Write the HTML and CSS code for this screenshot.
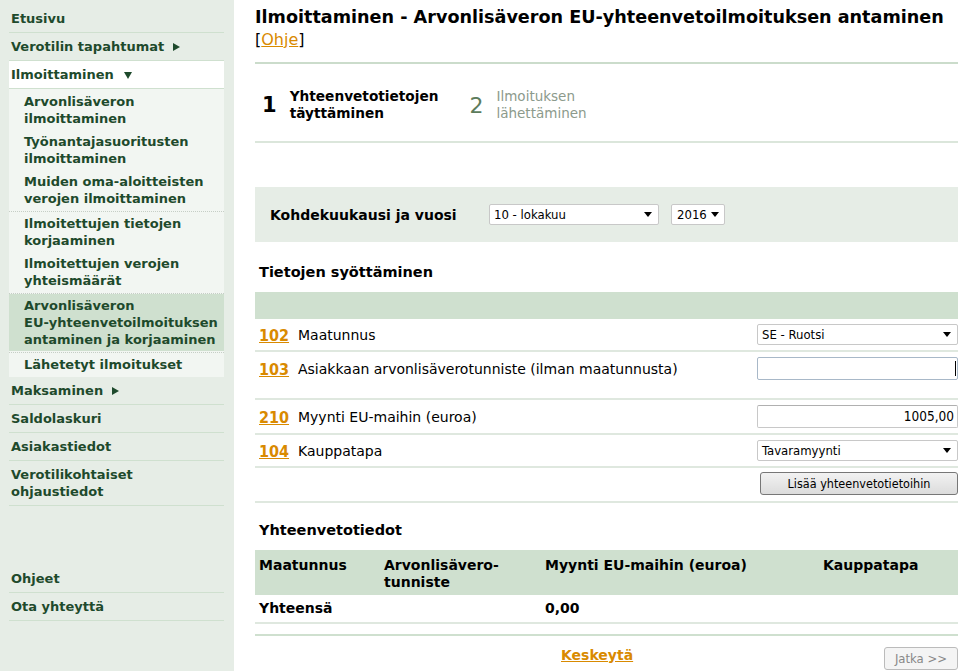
FILE: index.html
```html
<!DOCTYPE html>
<html lang="fi">
<head>
<meta charset="utf-8">
<title>Ilmoittaminen</title>
<link rel="stylesheet" href="styles.css">
</head>
<body>
<div class="page">
  <nav class="sidebar">
    <ul class="menu">
      <li class="item"><a>Etusivu</a></li>
      <li class="item"><a>Verotilin tapahtumat <svg class="arr" width="7" height="8" viewBox="0 0 7 8"><path d="M0 0L7 4L0 8Z"/></svg></a></li>
      <li class="item open"><a>Ilmoittaminen <svg class="arr down" width="8" height="7" viewBox="0 0 8 7"><path d="M0 0H8L4 7Z"/></svg></a>
        <ul class="sub">
          <li class="group">
            <a>Arvonlisäveron ilmoittaminen</a>
            <a>Työnantajasuoritusten ilmoittaminen</a>
            <a>Muiden oma-aloitteisten verojen ilmoittaminen</a>
          </li>
          <li class="group">
            <a>Ilmoitettujen tietojen korjaaminen</a>
            <a>Ilmoitettujen verojen yhteismäärät</a>
          </li>
          <li class="group">
            <a class="current">Arvonlisäveron <span class="nw">EU-yhteenvetoilmoituksen</span> antaminen ja korjaaminen</a>
          </li>
          <li class="group last">
            <a>Lähetetyt ilmoitukset</a>
          </li>
        </ul>
      </li>
      <li class="item"><a>Maksaminen <svg class="arr" width="7" height="8" viewBox="0 0 7 8"><path d="M0 0L7 4L0 8Z"/></svg></a></li>
      <li class="item"><a>Saldolaskuri</a></li>
      <li class="item"><a>Asiakastiedot</a></li>
      <li class="item"><a>Verotilikohtaiset ohjaustiedot</a></li>
    </ul>
    <ul class="menu bottom">
      <li class="item"><a>Ohjeet</a></li>
      <li class="item"><a>Ota yhteyttä</a></li>
    </ul>
  </nav>

  <main class="main">
    <h1 class="title">Ilmoittaminen - Arvonlisäveron EU-yhteenvetoilmoituksen antaminen</h1>
    <div class="help">[<a class="link">Ohje</a>]</div>
    <div class="divider"></div>

    <div class="steps">
      <div class="step active"><span class="num">1</span><span class="label">Yhteenvetotietojen<br>täyttäminen</span></div>
      <div class="step"><span class="num">2</span><span class="label">Ilmoituksen<br>lähettäminen</span></div>
    </div>

    <div class="period">
      <span class="period-label">Kohdekuukausi ja vuosi</span>
      <div class="select month"><span>10 - lokakuu</span><svg width="8" height="5" viewBox="0 0 8 5"><path d="M0 0H8L4 5Z"/></svg></div>
      <div class="select year"><span>2016</span><svg width="8" height="5" viewBox="0 0 8 5"><path d="M0 0H8L4 5Z"/></svg></div>
    </div>

    <h2 class="section">Tietojen syöttäminen</h2>
    <div class="bar"></div>

    <div class="row r1">
      <a class="code">102</a><span class="lbl">Maatunnus</span>
      <div class="select field"><span>SE - Ruotsi</span><svg width="8" height="5" viewBox="0 0 8 5"><path d="M0 0H8L4 5Z"/></svg></div>
    </div>
    <div class="row r2">
      <a class="code">103</a><span class="lbl">Asiakkaan arvonlisäverotunniste (ilman maatunnusta)</span>
      <div class="input focus"><span class="caret"></span></div>
    </div>
    <div class="row r3">
      <a class="code">210</a><span class="lbl">Myynti EU-maihin (euroa)</span>
      <div class="input num">1005,00</div>
    </div>
    <div class="row r4">
      <a class="code">104</a><span class="lbl">Kauppatapa</span>
      <div class="select field"><span>Tavaramyynti</span><svg width="8" height="5" viewBox="0 0 8 5"><path d="M0 0H8L4 5Z"/></svg></div>
    </div>
    <div class="row r5">
      <button class="btn add">Lisää yhteenvetotietoihin</button>
    </div>

    <h3 class="subtitle">Yhteenvetotiedot</h3>
    <table class="summary">
      <thead>
        <tr><th class="c1">Maatunnus</th><th class="c2">Arvonlisävero-<br>tunniste</th><th class="c3">Myynti EU-maihin (euroa)</th><th class="c4">Kauppatapa</th></tr>
      </thead>
      <tbody>
        <tr><td>Yhteensä</td><td></td><td>0,00</td><td></td></tr>
      </tbody>
    </table>

    <div class="actions">
      <a class="link cancel">Keskeytä</a>
      <button class="btn next" disabled>Jatka &gt;&gt;</button>
    </div>
  </main>
</div>
</body>
</html>
```

FILE: styles.css
```css
* { box-sizing: border-box; }
html, body { margin: 0; padding: 0; background: #fff; }
body { font-family: "DejaVu Sans", Verdana, sans-serif; font-size: 14px; color: #000; }

.page { display: flex; min-height: 671px; }

/* Sidebar */
.sidebar {
  width: 234px;
  flex: none;
  background: #e6ede6;
  padding: 5px 10px 0 9px;
  font-family: "DejaVu Sans", Verdana, sans-serif;
  font-weight: bold;
  font-size: 13px;
  line-height: 17px;
  color: #1e4a2c;
}
.menu { list-style: none; margin: 0; padding: 0; }
.menu.bottom { margin-top: 59px; }
.item > a {
  display: block;
  padding: 5px 2px;
  border-bottom: 1px solid #cfe0cf;
}
.item.open > a { background: #fff; }
.arr { fill: #1e4a2c; margin-left: 4px; vertical-align: 0; }
.arr.down { margin-left: 6px; }
.sub {
  list-style: none;
  margin: 0;
  padding: 1px 0 0;
  background: #f2f6f2;
}
.group { border-bottom: 1px dotted #c6cec6; padding-bottom: 1px; }
.group.last { border-bottom: none; padding-bottom: 1px; }
.sub a {
  display: block;
  padding: 3px 0 3px 15px;
}
.sub a.current { background: #cfe0cf; }
.nw { white-space: nowrap; }

/* Main */
.main {
  flex: 1;
  min-width: 0;
  padding: 0 15px 0 21px;
}
.title {
  margin: 0;
  padding-top: 6px;
  font-size: 17.6px;
  line-height: 22px;
  font-weight: bold;
}
.help {
  font-size: 16px;
  line-height: 20px;
  margin-top: 2px;
}
.divider {
  height: 2px;
  margin-top: 12px;
  background: #cbdccb;
}
.link { color: #d98a00; text-decoration: underline; font-weight: bold; }
.help .link { font-weight: normal; }

.steps {
  display: flex;
  gap: 31px;
  padding: 24px 0 19px 7px;
  border-bottom: 2px solid #dbe6db;
}
.step { display: flex; align-items: center; gap: 13px; }
.step .num { font-size: 21px; font-weight: bold; }
.step .label { font-size: 13.7px; line-height: 17px; font-weight: bold; }
.step:not(.active) .num { color: #5c7c5c; font-weight: normal; font-size: 22px; }
.step:not(.active) .label { color: #8c9a8c; font-weight: normal; font-size: 13.5px; }

.period {
  margin-top: 44px;
  height: 55px;
  background: #e6ede6;
  display: flex;
  align-items: center;
  padding-left: 15px;
}
.period-label {
  font-weight: bold;
  font-size: 14px;
  width: 219px;
}
.select {
  display: flex;
  align-items: center;
  justify-content: space-between;
  background: #fff;
  border: 1px solid #c8c8c8;
  border-radius: 2px;
  height: 21px;
  padding: 0 6px 0 4px;
  font-family: "DejaVu Sans Condensed", "DejaVu Sans", sans-serif;
  font-size: 13px;
}
.select svg { fill: #000; flex: none; }
.select.month { width: 170px; }
.select.year { width: 54px; margin-left: 12px; padding: 0 5px; }

.section {
  margin: 22px 0 0 4px;
  font-size: 14.5px;
  line-height: 17px;
  font-weight: bold;
}
.bar { height: 27px; background: #cfe0cf; margin-top: 11px; }

.row {
  display: flex;
  align-items: flex-start;
  padding: 5px 0 5px 4px;
  border-bottom: 2px solid #dfe8df;
}
.row .code {
  color: #d98a00;
  font-family: "DejaVu Sans Condensed", "DejaVu Sans", sans-serif;
  font-weight: bold;
  text-decoration: underline;
  width: 39px;
  flex: none;
  font-size: 16px;
  line-height: 19px;
  padding-top: 2px;
}
.row .lbl { flex: 1; font-size: 14px; line-height: 19px; padding-top: 2px; }
.row .field, .row .input { width: 201px; flex: none; }
.row.r2 { padding-bottom: 18px; }
.row.r2 .code, .row.r2 .lbl { line-height: 21px; }
.row.r3 .code, .row.r3 .lbl { line-height: 21px; }
.row.r5 { justify-content: flex-end; padding: 4px 0 6px; }

.input {
  height: 23px;
  background: #fff;
  border: 1px solid #c8c8c8;
  border-top-color: #b0b0b0;
  border-radius: 2px;
  padding: 0 3px;
  font-family: "DejaVu Sans Condensed", "DejaVu Sans", sans-serif;
  font-size: 13.5px;
  line-height: 21px;
  position: relative;
}
.input.focus { border-color: #a8b8c8; }
.input.num { text-align: right; }
.caret { position: absolute; right: 1px; top: 3px; width: 1px; height: 15px; background: #000; }

.btn {
  font-family: "DejaVu Sans Condensed", "DejaVu Sans", sans-serif;
  border-radius: 3px;
  cursor: default;
}
.btn.add {
  width: 198px;
  height: 23px;
  border: 1px solid #777;
  background: linear-gradient(#f2f2f2, #dcdcdc);
  color: #000;
  padding: 0;
  font-size: 12.5px;
}
.subtitle {
  margin: 17px 0 0 4px;
  font-size: 14.5px;
  line-height: 20px;
  font-weight: bold;
}
.summary {
  width: 100%;
  border-collapse: collapse;
  margin-top: 10px;
}
.summary th {
  background: #cfe0cf;
  text-align: left;
  vertical-align: top;
  font-size: 14px;
  line-height: 17px;
  padding: 7px 4px 4px;
  height: 45px;
}
.summary .c1 { width: 125px; }
.summary .c2 { width: 161px; }
.summary .c3 { width: 278px; }
.summary td {
  font-weight: bold;
  font-size: 14px;
  line-height: 17px;
  padding: 5px 4px 5px;
  border-bottom: 2px solid #dfe8df;
}

.actions {
  margin-top: 10px;
  border-top: 2px solid #cfe0cf;
  display: flex;
  align-items: flex-start;
  padding-top: 11px;
}
.cancel { font-size: 14px; line-height: 17px; margin-left: 306px; }
.btn.next {
  margin-left: auto;
  width: 74px;
  height: 23px;
  border: 1px solid #bbb;
  background: #f4f4f4;
  color: #888;
  padding: 0;
  font-size: 13px;
}
```
